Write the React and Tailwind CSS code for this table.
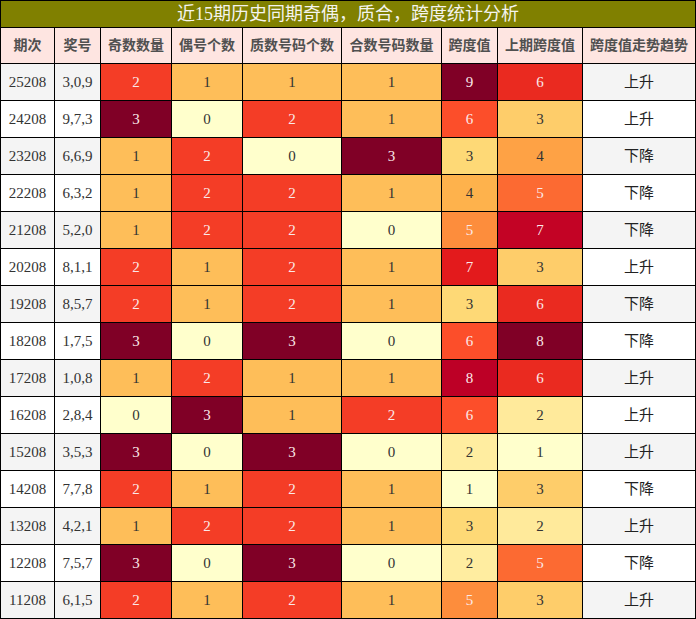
import React from 'react';

const rows = [
  ['25208', '3,0,9', 2, 1, 1, 1, 9, 6, '上升'],
  ['24208', '9,7,3', 3, 0, 2, 1, 6, 3, '上升'],
  ['23208', '6,6,9', 1, 2, 0, 3, 3, 4, '下降'],
  ['22208', '6,3,2', 1, 2, 2, 1, 4, 5, '下降'],
  ['21208', '5,2,0', 1, 2, 2, 0, 5, 7, '下降'],
  ['20208', '8,1,1', 2, 1, 2, 1, 7, 3, '上升'],
  ['19208', '8,5,7', 2, 1, 2, 1, 3, 6, '下降'],
  ['18208', '1,7,5', 3, 0, 3, 0, 6, 8, '下降'],
  ['17208', '1,0,8', 1, 2, 1, 1, 8, 6, '上升'],
  ['16208', '2,8,4', 0, 3, 1, 2, 6, 2, '上升'],
  ['15208', '3,5,3', 3, 0, 3, 0, 2, 1, '上升'],
  ['14208', '7,7,8', 2, 1, 2, 1, 1, 3, '下降'],
  ['13208', '4,2,1', 1, 2, 2, 1, 3, 2, '上升'],
  ['12208', '7,5,7', 3, 0, 3, 0, 2, 5, '下降'],
  ['11208', '6,1,5', 2, 1, 2, 1, 5, 3, '上升'],
];

const headers = ['期次', '奖号', '奇数数量', '偶号个数', '质数号码个数', '合数号码数量', '跨度值', '上期跨度值', '跨度值走势趋势'];

// heat colours (YlOrRd), light text on the dark end
const countColors = {
  0: ['bg-[#ffffcc]', false],
  1: ['bg-[#febe59]', false],
  2: ['bg-[#f43d26]', true],
  3: ['bg-[#800026]', true],
};
const spanColors = {
  1: ['bg-[#ffffcc]', false],
  2: ['bg-[#ffeda0]', false],
  3: ['bg-[#fed976]', false],
  4: ['bg-[#feb24c]', false],
  5: ['bg-[#fd8d3c]', true],
  6: ['bg-[#fc4e2a]', true],
  7: ['bg-[#e31a1c]', true],
  8: ['bg-[#bd0026]', true],
  9: ['bg-[#800026]', true],
};
const prevColors = {
  1: ['bg-[#ffffcc]', false],
  2: ['bg-[#ffea9b]', false],
  3: ['bg-[#fecd6a]', false],
  4: ['bg-[#fea245]', false],
  5: ['bg-[#fc6a32]', true],
  6: ['bg-[#ea2a20]', true],
  7: ['bg-[#c30325]', true],
  8: ['bg-[#800026]', true],
};

function HeatCell({ value, palette }) {
  const [bg, light] = palette[value];
  return (
    <div className={`${bg} ${light ? 'text-[#fbe9e9]' : 'text-[#333]'} h-[36px] flex items-center justify-center text-[15px]`}>
      {value}
    </div>
  );
}

export default function App() {
  return (
    <div className="w-[696px] bg-black p-px grid grid-cols-[53px_45px_70px_70px_98px_99px_55px_84px_112px] gap-px" style={{ fontFamily: '"Liberation Serif", "Noto Sans CJK SC", serif' }}>
      {/* Title */}
      <div className="col-span-9 h-[26px] bg-[#808000] text-[#f4f4ee] text-[18px] flex items-center justify-center leading-none">
        近15期历史同期奇偶，质合，跨度统计分析
      </div>

      {/* Header */}
      {headers.map((h) => (
        <div key={h} className="h-[35px] bg-[#fee5e1] text-[#505050] text-[14px] font-semibold flex items-center justify-center whitespace-nowrap">
          {h}
        </div>
      ))}

      {/* Rows */}
      {rows.map((r, i) => {
        const side = i % 2 === 0 ? 'bg-[#f4f4f4]' : 'bg-white';
        return (
          <React.Fragment key={r[0]}>
            <div className={`${side} h-[36px] flex items-center justify-center text-[15px] text-[#333]`}>{r[0]}</div>
            <div className={`${side} h-[36px] flex items-center justify-center text-[15px] text-[#333]`}>{r[1]}</div>
            <HeatCell value={r[2]} palette={countColors} />
            <HeatCell value={r[3]} palette={countColors} />
            <HeatCell value={r[4]} palette={countColors} />
            <HeatCell value={r[5]} palette={countColors} />
            <HeatCell value={r[6]} palette={spanColors} />
            <HeatCell value={r[7]} palette={prevColors} />
            <div className={`${side} h-[36px] flex items-center justify-center text-[15px] text-[#222]`}>{r[8]}</div>
          </React.Fragment>
        );
      })}
    </div>
  );
}
